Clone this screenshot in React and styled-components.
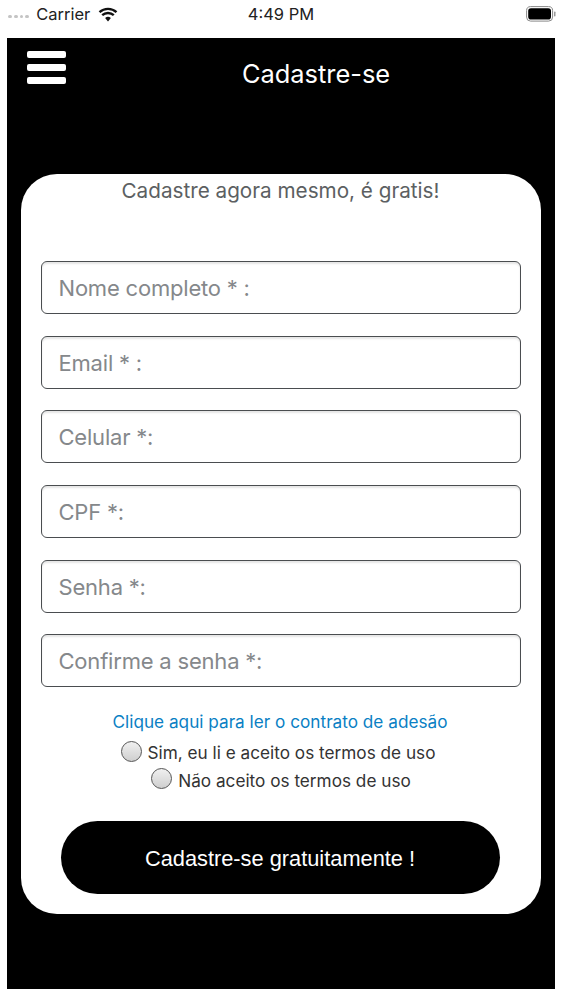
import React from "react";
import styled, { createGlobalStyle } from "styled-components";

const Global = createGlobalStyle`
  html, body { margin: 0; padding: 0; background: #fff; }
  body { width: 563px; height: 1000px; overflow: hidden; font-family: Inter, "Liberation Sans", sans-serif; }
`;

const Page = styled.div`
  width: 563px;
  height: 1000px;
  display: flex;
  flex-direction: column;
`;

const StatusBar = styled.div`
  height: 38px;
  padding: 0 7px 10px 8px;
  box-sizing: border-box;
  display: grid;
  grid-template-columns: 1fr auto 1fr;
  align-items: center;
  color: #222;
  font-size: 16.5px;
`;

const StatusLeft = styled.div`
  display: flex;
  align-items: center;
`;

const Signal = styled.div`
  display: flex;
  gap: 2px;
  margin-right: 7px;
  margin-top: 5px;
`;

const Dot = styled.span`
  width: 3.8px;
  height: 3.8px;
  border-radius: 50%;
  background: #c4c4c4;
`;

const Carrier = styled.span`
  margin-right: 8px;
`;

const Time = styled.span`
  margin-right: 2px;
`;

const StatusRight = styled.div`
  display: flex;
  justify-content: flex-end;
`;

const Screen = styled.div`
  margin: 0 8px 0 7px;
  height: 951px;
  background: #000;
  box-sizing: border-box;
  display: flex;
  flex-direction: column;
`;

const Header = styled.header`
  height: 136px;
  display: flex;
  align-items: flex-start;
  padding: 13px 0 0 20px;
  box-sizing: border-box;
`;

const Burger = styled.div`
  width: 39px;
  display: flex;
  flex-direction: column;
  gap: 6.5px;
`;

const BurgerLine = styled.span`
  height: 6.5px;
  border-radius: 2px;
  background: #fff;
`;

const Title = styled.h1`
  margin: 6px 0 0 176px;
  font-size: 25.4px;
  line-height: 34px;
  font-weight: 400;
  color: #fff;
`;

const Card = styled.main`
  margin: 0 14px;
  width: 520px;
  height: 740px;
  background: #fff;
  border-radius: 36px;
  box-sizing: border-box;
  padding: 4px 20px 0;
  display: flex;
  flex-direction: column;
  align-items: center;
`;

const Lead = styled.p`
  margin: 0 0 0 -1px;
  height: 83px;
  font-size: 20.7px;
  line-height: 26px;
  color: #5c5f62;
`;

const Fields = styled.div`
  width: 100%;
  display: flex;
  flex-direction: column;
  gap: 21.7px;
`;

const Field = styled.div`
  height: 53px;
  box-sizing: border-box;
  border: 1.5px solid #4a4d50;
  border-radius: 6px;
  box-shadow: inset 0 2px 2px rgba(0, 0, 0, 0.1);
  padding: 1px 0 0 16.5px;
  display: flex;
  align-items: center;
  font-size: 22px;
  letter-spacing: -0.2px;
  color: #85888b;
`;

const Contract = styled.a`
  margin: 24.6px 2px 0 0;
  font-size: 17.2px;
  line-height: 20px;
  color: #0a7fc4;
`;

const RadioGroup = styled.div`
  margin-top: 7px;
  display: flex;
  flex-direction: column;
  align-items: center;
`;

const Radio = styled.div`
  display: flex;
  align-items: center;
  gap: 6px;
  height: 27.5px;
  font-size: 17.2px;
  color: #333;
  transform: translateX(${(p) => p.$shift}px);
`;

const RadioCircle = styled.span`
  width: 19px;
  height: 19px;
  border-radius: 50%;
  border: 1.5px solid #555;
  background: linear-gradient(180deg, #f0f0f0, #cfcfcf);
  margin-top: -3px;
`;

const Submit = styled.button`
  margin: 27px 2px 0 0;
  width: 439px;
  height: 73px;
  padding: 2px 0 0;
  border: 0;
  border-radius: 37px;
  background: #000;
  color: #fff;
  font-family: "Liberation Sans", sans-serif;
  font-size: 21.8px;
`;

const fields = ["Nome completo * :", "Email * :", "Celular *:", "CPF *:", "Senha *:", "Confirme a senha *:"];

export default function App() {
  return (
    <Page>
      <Global />
      <StatusBar>
        <StatusLeft>
          <Signal><Dot /><Dot /><Dot /><Dot /></Signal>
          <Carrier>Carrier</Carrier>
          <svg width="20" height="15" viewBox="0 0 19 15" aria-hidden="true">
            <path d="M9.5 14.5 6.6 11a4.4 4.4 0 0 1 5.8 0Z" fill="#111" />
            <path d="M1 5.2a12.6 12.6 0 0 1 17 0M3.7 8.2a8.6 8.6 0 0 1 11.6 0" fill="none" stroke="#111" strokeWidth="2.4" />
          </svg>
        </StatusLeft>
        <Time>4:49 PM</Time>
        <StatusRight>
          <svg width="30" height="16" viewBox="0 0 30 16" aria-hidden="true">
            <rect x="0.6" y="0.6" width="26" height="14.5" rx="4" fill="none" stroke="#888" strokeWidth="1" />
            <rect x="2.2" y="2.2" width="22.8" height="11.3" rx="2.8" fill="#000" />
            <rect x="28" y="5.5" width="1.5" height="5" rx="0.7" fill="#999" />
          </svg>
        </StatusRight>
      </StatusBar>
      <Screen>
        <Header>
          <Burger><BurgerLine /><BurgerLine /><BurgerLine /></Burger>
          <Title>Cadastre-se</Title>
        </Header>
        <Card>
          <Lead>Cadastre agora mesmo, é gratis!</Lead>
          <Fields>
            {fields.map((f) => <Field key={f}>{f}</Field>)}
          </Fields>
          <Contract>Clique aqui para ler o contrato de adesão</Contract>
          <RadioGroup>
            <Radio $shift={-3}><RadioCircle />Sim, eu li e aceito os termos de uso</Radio>
            <Radio $shift={0}><RadioCircle />Não aceito os termos de uso</Radio>
          </RadioGroup>
          <Submit>Cadastre-se gratuitamente !</Submit>
        </Card>
      </Screen>
    </Page>
  );
}
